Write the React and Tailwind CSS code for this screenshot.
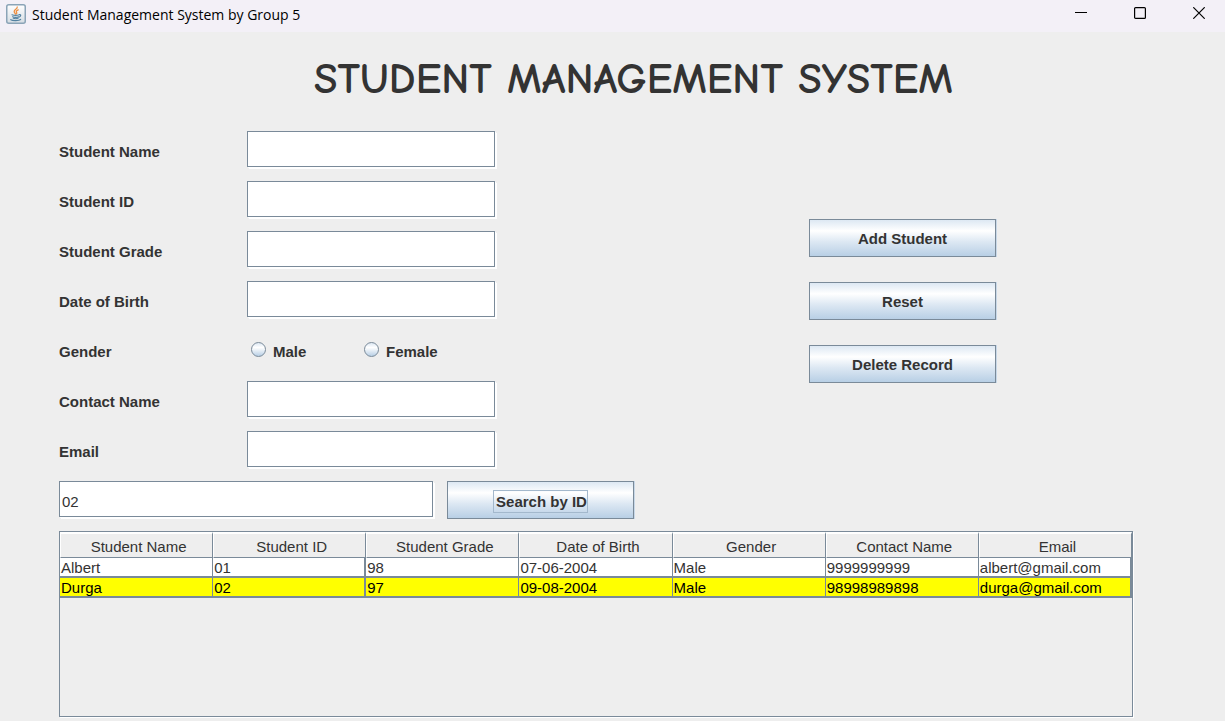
import React from "react";

const columns = [
  "Student Name",
  "Student ID",
  "Student Grade",
  "Date of Birth",
  "Gender",
  "Contact Name",
  "Email",
];

const students = [
  ["Albert", "01", "98", "07-06-2004", "Male", "9999999999", "albert@gmail.com"],
  ["Durga", "02", "97", "09-08-2004", "Male", "98998989898", "durga@gmail.com"],
];

const selectedId = "02";

const fieldClass =
  "h-9 border border-[#7a8a99] bg-white px-[2px] pt-1 text-[15px] text-[#333333] shadow-[1px_1px_0_#ffffff,2px_2px_0_#ffffff] outline-none";

const buttonClass =
  "flex w-[187px] items-center justify-center border border-[#7a8a99] bg-[linear-gradient(180deg,#dde8f3_0%,#ffffff_30%,#dde8f3_60%,#b8cfe5_100%)] pt-[2px] text-[15px] leading-5 font-bold text-[#333333] shadow-[1px_0_0_#c8d8e8]";

function JavaIcon() {
  return (
    <svg width="20" height="20" viewBox="0 0 20 20" fill="none" aria-hidden="true">
      <defs>
        <linearGradient id="tile" x1="0" y1="0" x2="0" y2="1">
          <stop offset="0" stopColor="#ffffff" />
          <stop offset="1" stopColor="#d5dde3" />
        </linearGradient>
      </defs>
      <rect x="0.75" y="0.75" width="18.5" height="18.5" rx="2" fill="url(#tile)" stroke="#8ba4b7" strokeWidth="1.5" />
      <path d="M11.2 3c.6 2-3.400 2.600-3 4.600.1.900 1 1.500 1.200 2.400M12.200 5.800c-1.700.7-2.400 1.400-1.600 2.500.4.600.2 1.200-.3 1.600" stroke="#ee8d3d" strokeWidth="1.300" strokeLinecap="round" />
      <path d="M6 10.800c1.800.6 5.300.6 7.300 0M6.600 12.800c1.700.6 4.500.6 6 0M7.300 14.300c1.400.5 3.500.5 4.800 0M13.300 10.600c1.900-.3 1.900 1.900-.4 2.500M4.800 15.700c1.700 1.200 8.300 1.100 9.800-.2" stroke="#5382a1" strokeWidth="1.200" strokeLinecap="round" />
    </svg>
  );
}

function TitleBar() {
  const control = "flex h-[26px] w-[52px] items-center justify-center";
  return (
    <header className="flex h-8 shrink-0 items-start justify-between bg-[#f3f0f7]">
      <div className="flex items-center gap-[6px] pt-[3px] pl-[6px]">
        <JavaIcon />
        <span className="pt-[2px] font-['Segoe_UI','Open_Sans',sans-serif] text-[14px] leading-5 text-black">
          Student Management System by Group 5
        </span>
      </div>
      <div className="flex gap-[7px]">
        <button type="button" aria-label="Minimize" className={control}>
          <svg width="12" height="12" viewBox="0 0 12 12">
            <path d="M0 5.500h12" stroke="#000" />
          </svg>
        </button>
        <button type="button" aria-label="Maximize" className={control}>
          <svg width="12" height="12" viewBox="0 0 12 12" fill="none">
            <rect x="0.600" y="0.600" width="10.800" height="10.800" rx="1" stroke="#000" strokeWidth="1.200" />
          </svg>
        </button>
        <button type="button" aria-label="Close" className={control}>
          <svg width="12" height="12" viewBox="0 0 12 12">
            <path d="M0.300 0.300l11.400 11.400M11.700 0.300L0.300 11.700" stroke="#000" strokeWidth="1.200" />
          </svg>
        </button>
      </div>
    </header>
  );
}

function Field({ id, label }) {
  return (
    <div className="flex items-center">
      <label htmlFor={id} className="w-[188px] pt-[5px] text-[15px] leading-5 font-bold">
        {label}
      </label>
      <input id={id} type="text" className={`${fieldClass} w-[248px]`} />
    </div>
  );
}

function GenderOption({ label }) {
  return (
    <label className="flex w-[113px] items-center gap-[7px] text-[15px] leading-5 font-bold">
      <input
        type="radio"
        name="gender"
        value={label}
        className="size-[15px] appearance-none rounded-full border border-[#7a8a99] bg-[linear-gradient(180deg,#dde8f3_0%,#ffffff_35%,#b8cfe5_100%)] checked:border-4"
      />
      <span className="pt-[5px]">{label}</span>
    </label>
  );
}

function StudentTable() {
  return (
    <div className="mt-3 mr-[92px] mb-1 ml-[59px] min-h-[120px] flex-1 border border-[#7a8a99] shadow-[1px_1px_0_#ffffff]">
      <table className="w-full table-fixed border-separate border-spacing-0 text-left text-[15px] leading-4">
        <thead>
          <tr>
            {columns.map((name) => (
              <th
                key={name}
                scope="col"
                className="h-[26px] border-t-2 border-r border-b border-l border-t-white border-r-[#7a8a99] border-b-[#7a8a99] border-l-white p-0 pt-[3px] pl-1 text-center font-normal whitespace-nowrap"
              >
                {name}
              </th>
            ))}
          </tr>
        </thead>
        <tbody>
          {students.map((row) => (
            <tr key={row[1]} className={row[1] === selectedId ? "bg-[#ffff00] text-black" : "bg-white"}>
              {row.map((value, i) => (
                <td
                  key={columns[i]}
                  className="h-5 border-r border-b-2 border-[#7a8a99] p-0 pt-[2px] pl-px whitespace-nowrap nth-2:border-r-2 last:border-r-2"
                >
                  {value}
                </td>
              ))}
            </tr>
          ))}
        </tbody>
      </table>
    </div>
  );
}

export default function App() {
  return (
    <div className="flex min-h-screen flex-col bg-[#eeeeee] font-['Liberation_Sans',Arial,sans-serif] text-[#333333]">
      <TitleBar />
      <main className="flex flex-1 flex-col">
        <h1 className="pt-5 pl-[42px] text-center font-['Comic_Sans_MS','Comic_Neue','Noto_Sans',sans-serif] text-[43px] leading-[54px] font-bold whitespace-nowrap">
          STUDENT MANAGEMENT SYSTEM
        </h1>
        <div className="flex justify-between pt-[25px] pr-[229px] pl-[59px]">
          <form className="flex flex-col gap-[14px]">
            <Field id="name" label="Student Name" />
            <Field id="student-id" label="Student ID" />
            <Field id="grade" label="Student Grade" />
            <Field id="birth" label="Date of Birth" />
            <div role="radiogroup" aria-labelledby="gender-label" className="flex h-9 items-center">
              <span id="gender-label" className="w-[188px] pt-[5px] text-[15px] leading-5 font-bold">
                Gender
              </span>
              <div className="flex pl-1">
                <GenderOption label="Male" />
                <GenderOption label="Female" />
              </div>
            </div>
            <Field id="contact" label="Contact Name" />
            <Field id="email" label="Email" />
          </form>
          <div className="flex flex-col gap-[25px] pt-[88px]">
            <button type="button" className={`${buttonClass} h-[38px]`}>Add Student</button>
            <button type="button" className={`${buttonClass} h-[38px]`}>Reset</button>
            <button type="button" className={`${buttonClass} h-[38px]`}>Delete Record</button>
          </div>
        </div>
        <div className="flex gap-[14px] pt-[14px] pl-[59px]">
          <input
            type="text"
            aria-label="Student ID to search"
            defaultValue="02"
            className={`${fieldClass} w-[374px]`}
          />
          <button type="button" className={`${buttonClass} h-[38px]`}>
            <span className="border border-[#a3b8cc] pt-px pl-[2px]">Search by ID</span>
          </button>
        </div>
        <StudentTable />
      </main>
    </div>
  );
}
